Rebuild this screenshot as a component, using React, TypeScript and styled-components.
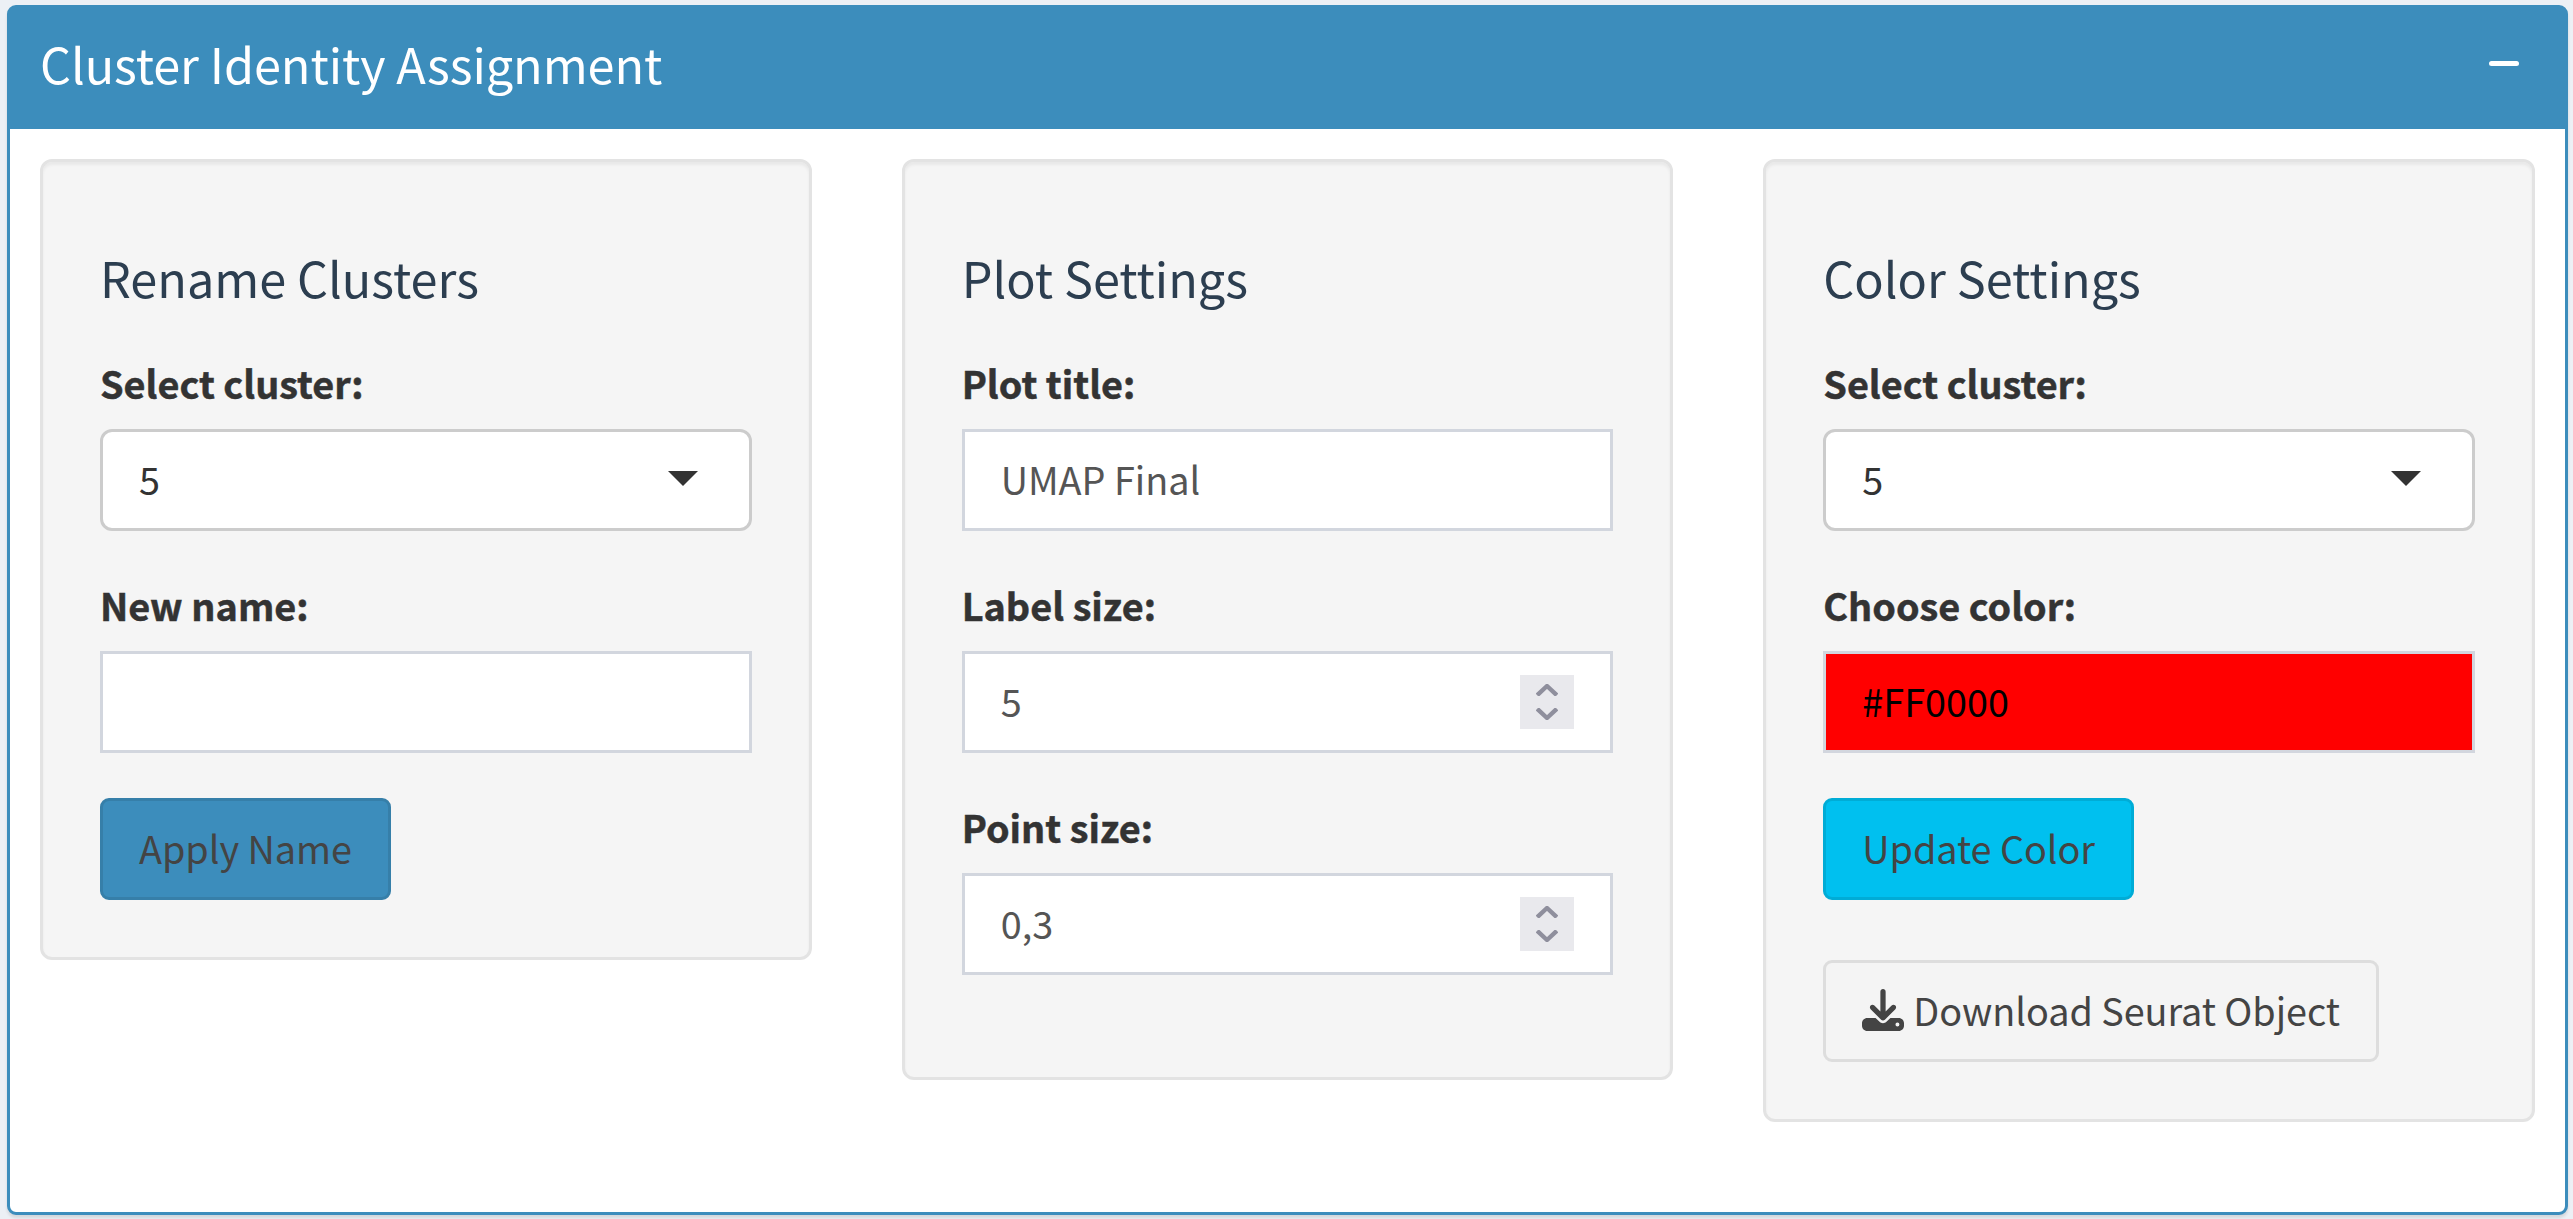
import React from 'react';
import styled, { createGlobalStyle } from 'styled-components';

const GlobalStyle = createGlobalStyle`
  *, *::before, *::after { box-sizing: border-box; }
  html, body { margin: 0; padding: 0; }
  body {
    background: #ecf0f5;
    color: #333;
    font-family: "Noto Sans CJK JP", "Noto Sans CJK SC", "Open Sans", sans-serif;
    font-size: 37.8px;
    line-height: 60px;
    overflow: hidden;
  }
`;

const Page = styled.main`
  height: 1219px;
  padding: 5px 5px 4px 7px;
`;

const Box = styled.section`
  display: flex;
  flex-direction: column;
  height: 1210px;
  border: 3px solid #3c8dbc;
  border-radius: 9px;
  background: #fff;
  box-shadow: 0 3px 3px rgba(0, 0, 0, 0.1);
`;

const BoxHeader = styled.header`
  display: flex;
  justify-content: space-between;
  align-items: flex-start;
  height: 121px;
  padding: 27px 45px 0 30px;
  background: #3c8dbc;
  color: #fff;
`;

const BoxTitle = styled.h3`
  margin: 0;
  font-size: 48.6px;
  font-weight: 400;
  line-height: 57px;
  letter-spacing: -0.06px;
`;

const CollapseButton = styled.button`
  display: flex;
  margin: 26px 0 0;
  padding: 0;
  border: 0;
  background: transparent;
  color: inherit;
`;

const MinusBar = styled.span`
  width: 30px;
  height: 5px;
  margin-right: 1px;
  border-radius: 2.5px;
  background: currentColor;
`;

const BoxBody = styled.div`
  display: grid;
  grid-template-columns: repeat(3, 1fr);
  column-gap: 90px;
  align-items: start;
  padding: 30px;
`;

const Well = styled.div`
  padding: 87px 57px 57px;
  border: 3px solid #e3e3e3;
  border-radius: 12px;
  background: #f5f5f5;
  box-shadow: inset 0 3px 3px rgba(0, 0, 0, 0.05);
`;

const WellTitle = styled.h4`
  height: 60px;
  margin: 0 0 45px;
  color: #2c3e50;
  font-size: 48.6px;
  font-weight: 400;
  line-height: 56px;
`;

const Field = styled.div`
  margin-bottom: 45px;
`;

const Label = styled.div`
  height: 60px;
  margin-bottom: 15px;
  font-weight: 700;
  line-height: 57px;
  -webkit-text-stroke: 0.5px currentColor;
`;

const Control = styled.div<{ $fill?: string; $ink?: string }>`
  display: flex;
  align-items: center;
  justify-content: space-between;
  height: 102px;
  padding: 0 36px;
  border: 3px solid #d2d6de;
  background: ${({ $fill = '#fff' }) => $fill};
  color: ${({ $ink = '#555' }) => $ink};
`;

const SelectControl = styled(Control)`
  padding-right: 51px;
  border-color: #ccc;
  border-radius: 12px;
  color: #333;
`;

const Value = styled.span`
  padding-bottom: 3px;
  white-space: pre;
`;

const Caret = styled.span`
  margin-bottom: 3px;
  border: 15px solid transparent;
  border-top-color: #333;
  border-bottom-width: 0;
`;

const Spinner = styled.span`
  display: flex;
  flex-direction: column;
  align-items: center;
  justify-content: space-between;
  width: 54px;
  height: 54px;
  padding: 9px 0;
  background: #e9e9ed;
`;

const Button = styled.button<{ $fill: string; $edge: string }>`
  display: flex;
  align-items: center;
  width: max-content;
  height: 102px;
  padding: 0 36px;
  border: 3px solid ${({ $edge }) => $edge};
  border-radius: 9px;
  background: ${({ $fill }) => $fill};
  color: #444;
  font: inherit;
  letter-spacing: -0.05px;

  & + & {
    margin-top: 60px;
  }
`;

const DownloadGlyph = styled.svg`
  width: 42px;
  height: 42px;
  margin: 0 9px 2px 0;
`;

const SpinnerArrows = () => (
  <Spinner>
    <svg width="22" height="12" viewBox="0 0 22 12" fill="none" stroke="#8f8f9d" strokeWidth="4.4">
      <path d="M1.2 11.2 L11 2 L20.8 11.2" strokeLinejoin="round" />
    </svg>
    <svg width="22" height="12" viewBox="0 0 22 12" fill="none" stroke="#8f8f9d" strokeWidth="4.4">
      <path d="M1.2 0.8 L11 10 L20.8 0.8" strokeLinejoin="round" />
    </svg>
  </Spinner>
);

const SelectField = ({ label, value }: { label: string; value: string }) => (
  <Field>
    <Label>{label}</Label>
    <SelectControl>
      <Value>{value}</Value>
      <Caret />
    </SelectControl>
  </Field>
);

const NumberField = ({ label, value }: { label: string; value: string }) => (
  <Field>
    <Label>{label}</Label>
    <Control>
      <Value>{value}</Value>
      <SpinnerArrows />
    </Control>
  </Field>
);

export default function App() {
  return (
    <>
      <GlobalStyle />
      <Page>
        <Box>
          <BoxHeader>
            <BoxTitle>Cluster Identity Assignment</BoxTitle>
            <CollapseButton aria-label="Collapse">
              <MinusBar />
            </CollapseButton>
          </BoxHeader>
          <BoxBody>
            <Well>
              <WellTitle>Rename Clusters</WellTitle>
              <SelectField label="Select cluster:" value="5" />
              <Field>
                <Label>New name:</Label>
                <Control />
              </Field>
              <Button $fill="#3c8dbc" $edge="#367fa9">
                <Value>Apply Name</Value>
              </Button>
            </Well>
            <Well>
              <WellTitle>Plot Settings</WellTitle>
              <Field>
                <Label>Plot title:</Label>
                <Control>
                  <Value>UMAP Final</Value>
                </Control>
              </Field>
              <NumberField label="Label size:" value="5" />
              <NumberField label="Point size:" value="0,3" />
            </Well>
            <Well>
              <WellTitle>Color Settings</WellTitle>
              <SelectField label="Select cluster:" value="5" />
              <Field>
                <Label>Choose color:</Label>
                <Control $fill="#ff0000" $ink="#000">
                  <Value>#FF0000</Value>
                </Control>
              </Field>
              <Button $fill="#00c0ef" $edge="#00acd6">
                <Value>Update Color</Value>
              </Button>
              <Button $fill="#f4f4f4" $edge="#ddd">
                <DownloadGlyph viewBox="0 0 512 512" fill="currentColor">
                  <path d="M288 32c0-17.7-14.3-32-32-32s-32 14.3-32 32l0 242.7-73.4-73.4c-12.5-12.5-32.8-12.5-45.3 0s-12.5 32.8 0 45.3l128 128c12.5 12.5 32.8 12.5 45.3 0l128-128c12.5-12.5 12.5-32.8 0-45.3s-32.8-12.5-45.3 0L288 274.7 288 32zM64 352c-35.3 0-64 28.7-64 64l0 32c0 35.3 28.7 64 64 64l384 0c35.3 0 64-28.7 64-64l0-32c0-35.3-28.7-64-64-64l-101.5 0-45.3 45.3c-25 25-65.5 25-90.5 0L165.5 352 64 352zm368 56a24 24 0 1 1 0 48 24 24 0 1 1 0-48z" />
                </DownloadGlyph>
                <Value>Download Seurat Object</Value>
              </Button>
            </Well>
          </BoxBody>
        </Box>
      </Page>
    </>
  );
}
